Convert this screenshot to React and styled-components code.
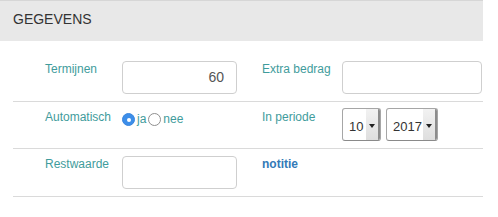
import React from "react";
import styled, { createGlobalStyle } from "styled-components";

const Global = createGlobalStyle`
  html, body { margin: 0; padding: 0; background: #fff; }
  body { font-family: "Liberation Sans", Arial, Helvetica, sans-serif; }
  * { box-sizing: border-box; }
`;

const Panel = styled.div`
  width: 483px;
`;

const Header = styled.div`
  height: 41px;
  background: #e8e8e8;
  border-top: 1px solid #d6d6d6;
  padding: 10px 0 0 13px;
  font-size: 14px;
  line-height: 16px;
  color: #333;
`;

const Table = styled.div`
  margin: 12px 0 0 13px;
`;

const Row = styled.div`
  display: grid;
  grid-template-columns: 77px 140px 80px 140px;
  padding: ${(p) => (p.$first ? "8px" : "7px")} 0 7px 32px;
  border-bottom: 1px solid #dadada;
  align-items: start;
`;

const Label = styled.div`
  font-size: 12px;
  line-height: 16px;
  color: ${(p) => (p.$link ? "#337ab7" : "#3f9c9c")};
  font-weight: ${(p) => (p.$link ? "bold" : "normal")};
`;

const Input = styled.div`
  width: ${(p) => p.$w}px;
  height: 33px;
  border: 1px solid #cfcfcf;
  border-radius: 4px;
  background: #fff;
  padding: 0 12px;
  font-size: 14px;
  line-height: 31px;
  color: #555;
  text-align: right;
`;

const RadioGroup = styled.div`
  display: flex;
  align-items: flex-start;
  font-size: 12px;
  line-height: 16px;
  color: #3f9c9c;
  padding-top: 2px;
`;

const Radio = styled.span`
  width: 13px;
  height: 13px;
  margin: 2px 2px 0 ${(p) => (p.$first ? 0 : 2)}px;
  border-radius: 50%;
  flex: none;
  display: flex;
  align-items: center;
  justify-content: center;
  background: ${(p) => (p.$checked ? "#3d8ee9" : "#fff")};
  border: 1px solid ${(p) => (p.$checked ? "#3a86de" : "#8f8f8f")};
  &::after {
    content: "";
    display: ${(p) => (p.$checked ? "block" : "none")};
    width: 4px;
    height: 4px;
    border-radius: 50%;
    background: #fff;
  }
`;

const Selects = styled.div`
  display: flex;
  gap: 5px;
  margin-top: -1px;
`;

const Select = styled.div`
  display: flex;
  width: ${(p) => p.$w}px;
  height: 33px;
  border: 1px solid #a6a6a6;
  border-bottom-color: #8a8a8a;
  border-radius: 3px;
  background: #fff;
  overflow: hidden;
`;

const SelectValue = styled.div`
  flex: 1;
  padding-left: 6px;
  font-size: 13px;
  line-height: 31px;
  color: #333;
  padding-top: 2px;
`;

const Arrow = styled.div`
  width: 14px;
  background: linear-gradient(#f2f2f2, #dedede);
  border-right: 2px solid #8c8c8c;
  display: flex;
  align-items: center;
  justify-content: center;
  padding-top: 2px;
  &::after {
    content: "";
    border-left: 3.5px solid transparent;
    border-right: 3.5px solid transparent;
    border-top: 4px solid #222;
  }
`;

export default function App() {
  return (
    <>
      <Global />
      <Panel>
        <Header>GEGEVENS</Header>
        <Table>
          <Row $first>
            <Label>Termijnen</Label>
            <Input $w={115}>60</Input>
            <Label>Extra bedrag</Label>
            <Input $w={140} />
          </Row>
          <Row>
            <Label>Automatisch</Label>
            <RadioGroup>
              <Radio $checked $first />
              <span>ja</span>
              <Radio />
              <span>nee</span>
            </RadioGroup>
            <Label>In periode</Label>
            <Selects>
              <Select $w={39}>
                <SelectValue>10</SelectValue>
                <Arrow />
              </Select>
              <Select $w={52}>
                <SelectValue>2017</SelectValue>
                <Arrow />
              </Select>
            </Selects>
          </Row>
          <Row>
            <Label>Restwaarde</Label>
            <Input $w={115} />
            <Label $link>notitie</Label>
            <div />
          </Row>
        </Table>
      </Panel>
    </>
  );
}
